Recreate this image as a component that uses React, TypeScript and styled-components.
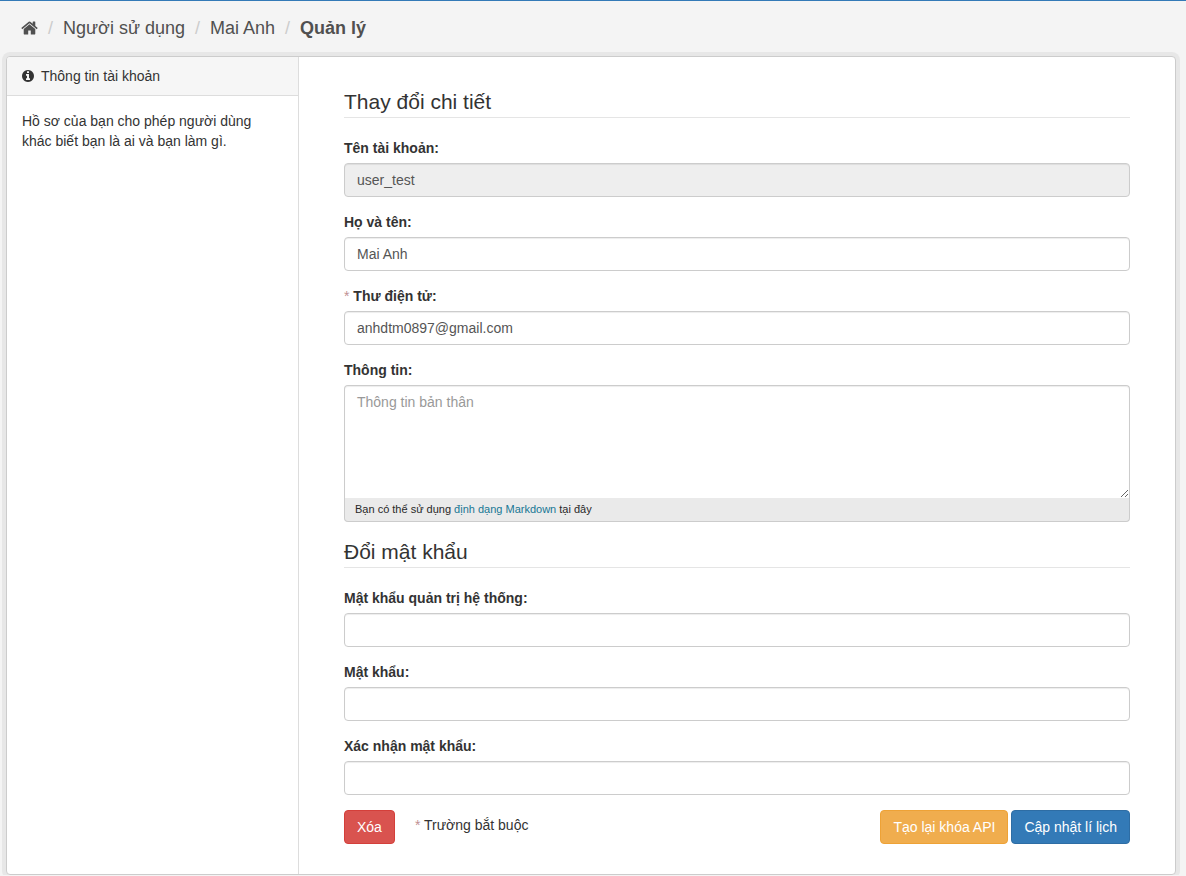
import React from "react";
import styled, { createGlobalStyle, css } from "styled-components";

const GlobalStyle = createGlobalStyle`
  *, *::before, *::after { box-sizing: border-box; }
  body {
    margin: 0;
    border-top: 1px solid #337ab7;
    background: #f4f4f4;
    color: #333;
    font: 14px/20px Arial, "Liberation Sans", sans-serif;
  }
  a { color: #165c73; text-decoration: none; }
  a:hover { text-decoration: underline; }
`;

const Toolbar = styled.nav`
  padding: 15px 21px 16px;
`;

const Breadcrumb = styled.ol`
  display: flex;
  align-items: center;
  margin: 0;
  padding: 0;
  list-style: none;
  font-size: 18px;
  line-height: 24px;

  li + li::before {
    content: "/";
    padding: 0 10px;
    color: #ccc;
    font-weight: 400;
  }
`;

const Crumb = styled.li<{ $active?: boolean }>`
  display: flex;
  align-items: center;
  font-weight: ${(p) => (p.$active ? 700 : 400)};

  a { color: #505050; }
`;

const Icon = styled.svg<{ $width: number; $height: number }>`
  display: block;
  flex: none;
  width: ${(p) => p.$width}px;
  height: ${(p) => p.$height}px;
  fill: currentColor;
`;

const Wrapper = styled.div`
  display: grid;
  grid-template-columns: 1fr 3fr;
  margin: 0 10px 0 6px;
  border: 1px solid #ccc;
  border-radius: 4px;
  background: #fff;
  box-shadow: 0 0 0 4px rgba(0, 0, 0, 0.05);
`;

const Sidebar = styled.aside`
  border-right: 1px solid #ddd;
`;

const SidebarHeading = styled.h2`
  display: flex;
  align-items: center;
  gap: 7px;
  margin: 0;
  padding: 10px 15px;
  border-bottom: 1px solid #ddd;
  border-top-left-radius: 3px;
  background: #f6f6f6;
  font-size: 14px;
  font-weight: 400;
  line-height: 18px;
`;

const SidebarText = styled.p`
  margin: 0;
  padding: 15px;
`;

const Main = styled.main`
  min-width: 0;
  padding: 30px 45px;
`;

const Section = styled.fieldset`
  min-width: 0;
  margin: 0 0 15px;
  padding: 0;
  border: 0;
`;

const Legend = styled.legend`
  width: 100%;
  margin: 0 0 20px;
  padding: 0;
  border-bottom: 1px solid #e5e5e5;
  font-size: 21px;
  line-height: 30px;
`;

const Group = styled.div`
  & + & { margin-top: 15px; }
`;

const Label = styled.label`
  display: block;
  margin-bottom: 5px;
  font-weight: 700;
`;

const Star = styled.span`
  color: #c09193;
  font-weight: 400;
`;

const control = css`
  display: block;
  width: 100%;
  padding: 6px 12px;
  border: 1px solid #ccc;
  border-radius: 4px;
  background: #fff;
  box-shadow: inset 0 1px 1px rgba(0, 0, 0, 0.075);
  color: #555;
  font: inherit;
`;

const Input = styled.input`
  ${control}
  height: 34px;
  &:read-only { background: #eee; }
`;

const TextArea = styled.textarea`
  ${control}
  height: 113px;
  border-bottom: 0;
  border-radius: 4px 4px 0 0;
  resize: vertical;
  &::placeholder { color: #999; opacity: 1; }
`;

const EditorInfo = styled.div`
  padding: 1px 10px 2px;
  border: 1px solid #ccc;
  border-top: 0;
  border-radius: 0 0 4px 4px;
  background: #eaeaea;
  color: #282828;
  font-size: 11px;
  a { color: #187794; }
`;

const Actions = styled.div`
  display: flex;
  gap: 3px;
`;

const RequiredNote = styled.p`
  flex: 1;
  margin: 0;
  padding: 5px 17px;
`;

const tones = {
  danger: ["#d9534f", "#d43f3a"],
  warning: ["#f0ad4e", "#eea236"],
  primary: ["#337ab7", "#2e6da4"],
};

const Button = styled.button<{ $tone: keyof typeof tones }>`
  padding: 6px 12px;
  border: 1px solid ${(p) => tones[p.$tone][1]};
  border-radius: 4px;
  background: ${(p) => tones[p.$tone][0]};
  color: #fff;
  font: inherit;
  white-space: nowrap;
  cursor: pointer;
`;

const HOME =
  "M1472 992v480q0 26-19 45t-45 19h-384v-384h-256v384h-384q-26 0-45-19t-19-45v-480q0-1 .5-3t.5-3l575-474 575 474q1 2 1 6zm223-69l-62 74q-8 9-21 11h-3q-13 0-21-7l-692-577-692 577q-12 8-24 7-13-2-21-11l-62-74q-8-10-7-23.5t11-21.5l719-599q32-26 76-26t76 26l244 204v-195q0-14 9-23t23-9h192q14 0 23 9t9 23v408l219 182q10 8 11 21.5t-7 23.5z";
const INFO =
  "M1152 1376v-160q0-14-9-23t-23-9h-96v-512q0-14-9-23t-23-9h-320q-14 0-23 9t-9 23v160q0 14 9 23t23 9h96v320h-96q-14 0-23 9t-9 23v160q0 14 9 23t23 9h448q14 0 23-9t9-23zm-128-896v-160q0-14-9-23t-23-9h-192q-14 0-23 9t-9 23v160q0 14 9 23t23 9h192q14 0 23-9t9-23zm640 416q0 209-103 385.5t-279.5 279.5-385.5 103-385.5-103-279.5-279.5-103-385.5 103-385.5 279.5-279.5 385.5-103 385.5 103 279.5 279.5 103 385.5z";

type FieldProps = {
  id: string;
  label: string;
  required?: boolean;
} & React.InputHTMLAttributes<HTMLInputElement>;

function Field({ id, label, required, ...rest }: FieldProps) {
  return (
    <Group>
      <Label htmlFor={id}>
        {required && <Star>* </Star>}
        {label}
      </Label>
      <Input id={id} name={id} required={required} {...rest} />
    </Group>
  );
}

export default function App() {
  return (
    <>
      <GlobalStyle />
      <Toolbar>
        <Breadcrumb>
          <Crumb>
            <a href="#home" aria-label="Trang chủ">
              <Icon $width={17} $height={18} viewBox="64 0 1664 1792"><path d={HOME} /></Icon>
            </a>
          </Crumb>
          <Crumb><a href="#users">Người sử dụng</a></Crumb>
          <Crumb><a href="#user">Mai Anh</a></Crumb>
          <Crumb $active><a href="#edit">Quản lý</a></Crumb>
        </Breadcrumb>
      </Toolbar>
      <Wrapper>
        <Sidebar>
          <SidebarHeading>
            <Icon $width={12} $height={14} viewBox="128 0 1536 1792"><path d={INFO} /></Icon>
            Thông tin tài khoản
          </SidebarHeading>
          <SidebarText>
            Hồ sơ của bạn cho phép người dùng khác biết bạn là ai và bạn làm gì.
          </SidebarText>
        </Sidebar>
        <Main>
          <form onSubmit={(e) => e.preventDefault()}>
            <Section>
              <Legend>Thay đổi chi tiết</Legend>
              <Field id="name" label="Tên tài khoản:" defaultValue="user_test" readOnly />
              <Field id="fullname" label="Họ và tên:" defaultValue="Mai Anh" />
              <Field id="email" label="Thư điện tử:" type="email" defaultValue="anhdtm0897@gmail.com" required />
              <Group>
                <Label htmlFor="about">Thông tin:</Label>
                <TextArea id="about" name="about" placeholder="Thông tin bản thân" />
                <EditorInfo>
                  Bạn có thể sử dụng <a href="#markdown">định dạng Markdown</a> tại đây
                </EditorInfo>
              </Group>
            </Section>
            <Section>
              <Legend>Đổi mật khẩu</Legend>
              <Field id="old_password" label="Mật khẩu quản trị hệ thống:" type="password" />
              <Field id="password1" label="Mật khẩu:" type="password" />
              <Field id="password2" label="Xác nhận mật khẩu:" type="password" />
            </Section>
            <Actions>
              <Button type="button" $tone="danger">Xóa</Button>
              <RequiredNote><Star>*</Star> Trường bắt buộc</RequiredNote>
              <Button type="button" $tone="warning">Tạo lại khóa API</Button>
              <Button type="submit" $tone="primary">Cập nhật lí lịch</Button>
            </Actions>
          </form>
        </Main>
      </Wrapper>
    </>
  );
}
